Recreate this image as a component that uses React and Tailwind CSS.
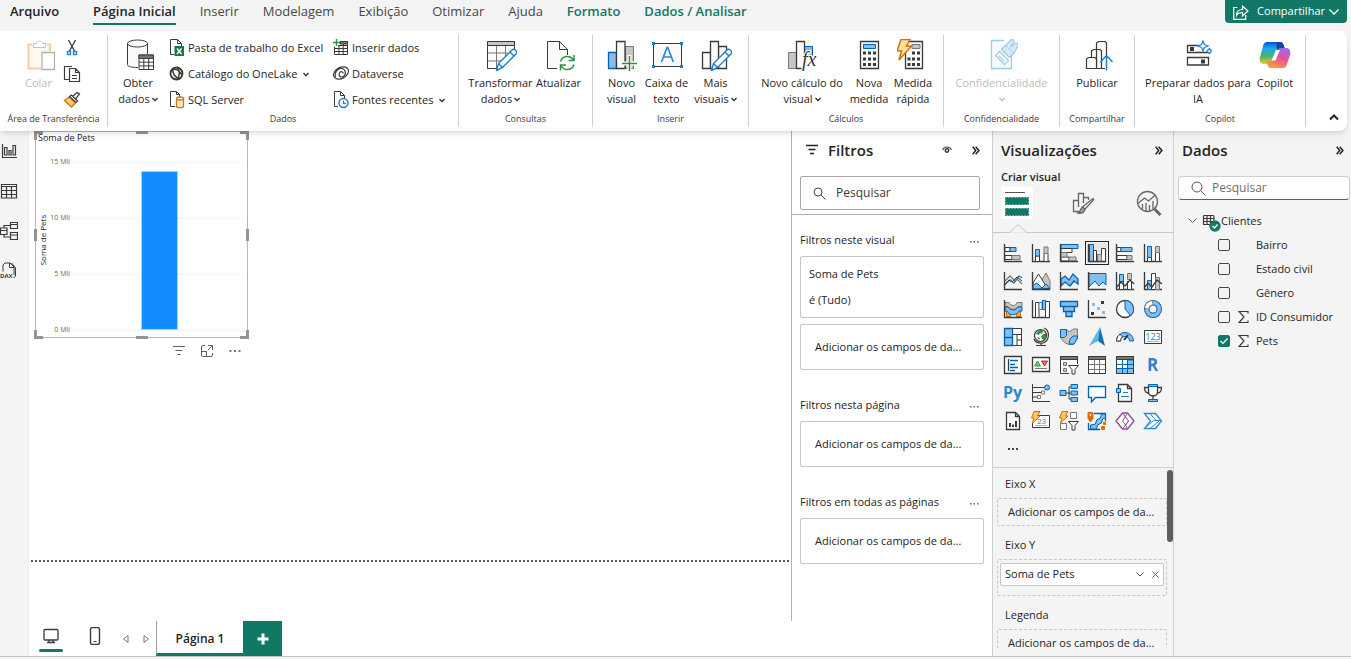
import React from "react";

const K = "#3a3a38";
const B = "#0063b1";
const LB = "#83beec";
const G = "#c8c6c4";
const DG = "#797774";
const GR = "#309048";
const OR = "#d47300";

function Svg({ size = 20, w, h, box, className = "", children }) {
  return (
    <svg
      width={w || size}
      height={h || size}
      viewBox={box || `0 0 ${size} ${size}`}
      fill="none"
      stroke={K}
      strokeWidth="1"
      className={`block shrink-0 ${className}`}
      aria-hidden="true"
    >
      {children}
    </svg>
  );
}

function Chevron({ className = "" }) {
  return (
    <Svg w={6} h={5} box="0 0 6 5" className={className}>
      <path d="M.5 1 3 3.6 5.500 1" stroke="currentColor" strokeWidth="1.300" />
    </Svg>
  );
}

function DoubleChevron() {
  return (
    <Svg w={8} h={9} box="0 0 8 9">
      <path d="M.7.800 3.700 4.500.700 8.200M3.700.800l3.200 3.700-3.200 3.700" stroke="#222" strokeWidth="1.500" />
    </Svg>
  );
}

const pencil = (
  <path d="m11.500 31.500 2-7L27 11c2-2 6 1.500 4 4L17.500 28.500Zm2-7 4 4M25 13l4 4" fill="#fff" stroke="#1a7fc4" strokeWidth="1.400" />
);

/* ---------- ribbon icons, 32 px ---------- */
const big = {
  paste: (
    <g opacity=".45">
      <path d="M9 5.500H5.500v24H18M24 5.500h3V12" stroke="#e8913a" strokeWidth="2" />
      <path d="M7 7h19v6h-8v15H7Z" fill="#fdf1dd" stroke="none" />
      <path d="M10.500 8.500v-4h3c0-3 6-3 6 0h3v4Z" fill="#fff" stroke="#777" />
      <path d="M19 13.500h12.500v17H19Z" fill="#fff" stroke="#555" strokeWidth="1.300" />
    </g>
  ),
  database: (
    <g transform="translate(3)">
      <path d="M3 5v20.500c2 2.500 6 2.500 10 2.500V15h9V5Z" fill="#fafafa" stroke="none" />
      <ellipse cx="12.500" cy="4.500" rx="10" ry="3.500" fill="#fff" />
      <path d="M2.500 4.500v21c0 2 4 3 10.500 3M22.500 4.500V15" />
      <path d="M14 16h14.500v14.500H14Z" fill="#fff" />
      <path d="M14 16h14.500v3.500H14Z" fill={DG} />
      <path d="M18.800 19v11M23.700 19v11M14 23.200h14M14 26.900h14" />
    </g>
  ),
  transform: (
    <>
      <path d="M2.500 2.500h27v27h-27Z" fill="#fafafa" stroke="none" />
      <path d="M12 29.500H2.500v-27h27V12" />
      <path d="M2.500 2.500h27v4h-27Z" fill={G} />
      <path d="M11.500 7v22M20.500 7v11M3 14h20M3 22h13" stroke={DG} />
      {pencil}
    </>
  ),
  refresh: (
    <>
      <path d="M4.500 2.500h12l8 8V16M14 29.500H4.500v-27" />
      <path d="M5 3h11v8h8v5l-7 3-3 10H5Z" fill="#fafafa" stroke="none" />
      <path d="M16.500 2.500v8h8Z" fill="#fff" />
      <path d="M17.500 22.500c2-6 10-7 13-1M31 16v5.500h-5.500M31 25.500c-2 6-10 7-13 1M17.500 31.500V26H23" stroke={GR} strokeWidth="1.500" />
    </>
  ),
  newVisual: (
    <>
      <path d="M2.500 13.500h8v16h-8Z" fill={LB} stroke={B} strokeWidth="1.300" />
      <path d="M19.500 7.500h8v22h-8Z" fill={G} stroke={DG} />
      <path d="M10.500 2.500h8.500v27h-8.500Z" fill="#fafafa" strokeWidth="1.300" />
      <path d="M23.500 16v16M16 24.500h15" stroke="#fff" strokeWidth="4" />
      <path d="M23.500 17v15M16 24.500h15" stroke={GR} strokeWidth="1.500" />
    </>
  ),
  textbox: (
    <>
      <path d="M2.500 4.500h28v23h-28Z" fill="#fafafa" />
      <path d="M10.500 23 16 8.500h.8L22.300 23M12.500 18h8" stroke="#2b88d8" strokeWidth="1.700" />
      <path d="M1 3h3v3H1ZM29 3h3v3h-3ZM1 26h3v3H1ZM29 26h3v3h-3Z" fill="#1a7fc4" stroke="none" />
    </>
  ),
  moreVisuals: (
    <>
      <path d="M2.500 13.500h8v16h-8ZM18.500 7.500h8v22h-8Z" fill="#fafafa" strokeWidth="1.300" />
      <path d="M10.500 2.500h8v27h-8Z" fill="#fafafa" strokeWidth="1.300" />
      {pencil}
    </>
  ),
  calc: (
    <>
      <path d="M2.500 13.500h8v16h-8Z" fill={G} stroke={DG} />
      <path d="M18.500 7.500h8v9h-8Z" fill={LB} stroke={B} />
      <path d="M16 29.500h-5.500v-27h8V17" fill="#fafafa" strokeWidth="1.300" />
      <text x="16" y="27" fontFamily="Liberation Serif, serif" fontStyle="italic" fontSize="20" fill={K} stroke="#fff" strokeWidth="2" paintOrder="stroke">fx</text>
    </>
  ),
  measure: (
    <>
      <path d="M7.500 2.500h18v27h-18Z" fill="#fafafa" strokeWidth="1.300" />
      <path d="M10.500 5.500h12v4h-12Z" fill={LB} stroke={B} />
      <path d="M10 12.500h3v3h-3Zm5 0h3v3h-3Zm5 0h3v3h-3Zm-10 6h3v3h-3Zm5 0h3v3h-3Zm5 0h3v3h-3Zm-10 5.500h3v3h-3Zm5 0h3v3h-3Zm5 0h3v3h-3Z" fill={K} stroke="none" />
    </>
  ),
  quick: (
    <>
      <path d="M8.500 2.500h17v27h-17Z" fill="#fafafa" strokeWidth="1.300" />
      <path d="M15 5.500h8v4h-8Z" fill={G} stroke={DG} />
      <path d="M10.500 18.500h3v3h-3ZM15 12.500h3v3h-3Zm5 0h3v3h-3Zm-5 6h3v3h-3Zm5 0h3v3h-3Zm-9.500 5.500h3v3h-3Zm4.500 0h3v3h-3Zm5 0h3v3h-3Z" fill={K} stroke="none" />
      <path d="M4 .5h9L9.500 7h5L2 21l2.500-9H0Z" fill="#fce0a0" stroke={OR} strokeWidth="1.500" />
    </>
  ),
  sensitivity: (
    <g stroke="#9fcbe5" strokeWidth="1.300" transform="translate(2)">
      <path d="M16 1.500H3.500v28h20V17" fill="#f7fbfd" />
      <path d="m7.500 16.500 4-4 9 9-4 4ZM10.500 16.500l6 6" fill="#fff" />
      <path d="m13.500 10.500 4.500-4.500 8 8-4.500 4.500Z" fill="#d4ebf7" />
      <path d="m18 6 5-5c1.500-1.500 4 1 2.500 2.500L22.500 8 27 4.500c2-1 4 1 2.500 3L26 14" fill="#d4ebf7" />
    </g>
  ),
  publish: (
    <>
      <path d="M15.500 29.500V4l2-1.500h6.500l1.500 1.500v12M10.500 29.500V12l2-1.500h6.500l1.500 1.500v17.500Z" fill="#fafafa" strokeWidth="1.200" />
      <path d="M5.500 29.500V20l2-1.500h6.500l1.500 1.500v9.500Z" fill="#fafafa" strokeWidth="1.200" />
      <path d="M5.500 29.500H24" />
      <path d="M25.500 31.500V17M19.500 23l6-6.500 6 6.500" stroke="#1a7fc4" strokeWidth="1.500" />
    </>
  ),
  prepare: (
    <>
      <path d="M17 6.500H5.500v7h21v-2M5.500 18.500h21v7.500h-21Z" fill="#fff" strokeWidth="1.300" />
      <path d="M8 8h4v4H8ZM19 20.500h4v4h-4Z" fill={K} stroke="none" />
      <path d="m21 2 1.400 3.600L26 7l-3.600 1.400L21 12l-1.400-3.600L16 7l3.600-1.400ZM27.500 9.500l2 2.500-2 2.500-2.500-2.500Z" fill="#fff" stroke="#2b88d8" strokeWidth="1.300" />
    </>
  ),
  copilot: (
    <g stroke="none">
      <defs>
        <linearGradient id="cpA" x1="0" y1="0" x2="0" y2="1">
          <stop offset="0" stopColor="#0a55c9" />
          <stop offset=".3" stopColor="#20a8f0" />
          <stop offset=".65" stopColor="#49b36a" />
          <stop offset="1" stopColor="#f2cf1f" />
        </linearGradient>
        <linearGradient id="cpB" x1=".7" y1="0" x2=".3" y2="1">
          <stop offset="0" stopColor="#a06bf0" />
          <stop offset=".45" stopColor="#e3509a" />
          <stop offset="1" stopColor="#ff9a3c" />
        </linearGradient>
      </defs>
      <path d="M8 3h13c2 0 3 1 3.500 3l1.500 4h-4c-2 0-3 1-4 3l-3 9c-1 2-2 3-4 3H5c-4 0-5-3-4-7L4 7c1-3 2-4 4-4Z" fill="url(#cpA)" />
      <path d="M17 3h4c2 0 3 1 3.500 3l1.500 4h-4l-4 1Z" fill="#1743a8" />
      <path d="M24 29H12c-2 0-3-1-3.500-3L7.500 22.500H11c2 0 3-1 4-3l3-7.500c1-2 2-3 4-3h5c4 0 5 3 4 7l-3 9c-1 3-2 4-4 4Z" fill="url(#cpB)" />
      <path d="M17 11h4l-4.500 10.500h-4Z" fill="#fff" />
    </g>
  ),
};

/* ---------- ribbon icons, 18 px ---------- */
const small = {
  cut: (
    <>
      <path d="M5.500 1 12 13M12.500 1 6 13" strokeWidth="1.300" />
      <path d="M4.500 12.500h3v3h-3ZM10.500 12.500h3v3h-3Z" stroke="#2b88d8" strokeWidth="1.500" />
    </>
  ),
  copy: (
    <>
      <path d="M6 14.500H1.500v-13H9" strokeWidth="1.200" />
      <path d="M6.500 3.500h6l4 4v9h-10ZM12.500 3.500v4h4M9 10.500h5M9 13.500h5" fill="#fff" strokeWidth="1.200" />
    </>
  ),
  brush: (
    <>
      <path d="m9 6 5-4.500 2.500 1.500L12 8.500" fill="#fff" strokeWidth="1.200" />
      <path d="m1.500 9.500 7 6.500 4-4-6-6Z" fill="#f8c58a" stroke={OR} strokeWidth="1.400" />
      <path d="m6.500 5.500 6.500 6L14.500 10 8.500 4Z" fill="#fff" strokeWidth="1.200" />
    </>
  ),
  excel: (
    <>
      <path d="M6 15.500H2.500v-15h7l4 4V7M9.500.5v4h4" fill="#fff" stroke={K} />
      <path d="M6.500 7H16v10H6.500Z" fill="#107c41" stroke="none" />
      <path d="m9 9.500 4.500 5.500M13.500 9.500 9 15" stroke="#fff" strokeWidth="1.500" />
    </>
  ),
  onelake: (
    <>
      <circle cx="8.500" cy="8.500" r="6" strokeWidth="1.800" />
      <path d="M3 5c4-2 8 0 11 5M5 3c-1 5 2 10 7 11M9 2c3 3 3 8 .5 12" strokeWidth="1.500" />
    </>
  ),
  sql: (
    <>
      <path d="M7 15.500H2.500v-15h6l3 3V6M8.500.5v3h3" fill="#fff" />
      <path d="M8.500 7.500v8c0 1.500 7 1.500 7 0v-8" fill="#fde9cf" stroke={OR} strokeWidth="1.300" />
      <ellipse cx="12" cy="7.500" rx="3.500" ry="1.500" fill="#fff" stroke={OR} strokeWidth="1.300" />
    </>
  ),
  insert: (
    <>
      <path d="M2.500 7.500v8h13v-13h-7" fill="#fff" />
      <path d="M8 2.500h7.500V5H8Z" fill={DG} />
      <path d="M7 6v9.500M11.200 5v10.500M6 6.500h9M2.500 9.500h13M2.500 12.500h13" />
      <path d="M4.500 0v7M1 3.500h7" stroke={GR} strokeWidth="1.400" />
    </>
  ),
  dataverse: (
    <>
      <ellipse cx="9" cy="8" rx="8" ry="5.500" transform="rotate(-28 9 8)" strokeWidth="1.200" />
      <path d="M3.500 12C2 7 6 3 10 3.500c4 1 4.500 6 1.500 8-3 1.500-5.500-1-4-3.500 1-2 4-1.500 3.500.5" strokeWidth="1.200" />
    </>
  ),
  recent: (
    <>
      <path d="M6 15.500H2.500v-15h6l4 4V7M8.500.5v4h4" fill="#fff" />
      <circle cx="11.500" cy="12" r="4.500" fill="#fff" stroke="#1a7fc4" strokeWidth="1.400" />
      <path d="M11.500 9.500v3h2.500" stroke="#1a7fc4" strokeWidth="1.200" />
    </>
  ),
};

/* ---------- gallery icons, 20 px ---------- */
const axis = <path d="M1.500 1v17.500H19" strokeWidth="1.300" />;
const bolt = <path d="M3 .5h6L6.500 5H9L1.500 12l1.300-5H.5Z" fill="#f9c76a" stroke={OR} />;
const doc = <path d="M3.500 1.500h9l4 4v13h-13ZM12.500 1.500v4h4" fill="#fff" strokeWidth="1.300" />;
const gallery = [
  ["Gráfico de barras empilhadas", <>{axis}<path d="M2 4.500h5v4H2ZM2 12.500h7v4H2Z" fill="#fff" /><path d="M7 4.500h6v4H7Z" fill={LB} stroke={B} /><path d="M9 12.500h8v4H9Z" fill={G} stroke={DG} /></>],
  ["Gráfico de colunas empilhadas", <>{axis}<path d="M4.500 13h4v5.500h-4ZM13 10.500h4v8h-4Z" fill="#fff" /><path d="M4.500 6.500h4v6.500h-4Z" fill={LB} stroke={B} /><path d="M13 4h4v6.500h-4Z" fill={G} stroke={DG} /></>],
  ["Gráfico de barras clusterizadas", <><path d="M2 1.500h17v4H2Z" fill={LB} stroke={B} /><path d="M2 5.500h11v4H2ZM2 14h8v4H2Z" fill="#fff" /><path d="M2 9.500h6V14H2ZM10 14h7v4h-7Z" fill={G} stroke={DG} />{axis}</>],
  ["Gráfico de colunas clusterizadas", <><path d="M2.500 1.500h4v17h-4Z" fill={LB} stroke={B} /><path d="M6.500 7.500h3v11h-3ZM14.500 5.500h4v13h-4Z" fill="#fff" /><path d="M10.500 11.500h4v7h-4Z" fill={G} stroke={DG} />{axis}</>],
  ["Gráfico de 100% barras empilhadas", <>{axis}<path d="M2 4.500h4v4H2ZM2 12.500h10v4H2Z" fill="#fff" /><path d="M6 4.500h11v4H6Z" fill={LB} stroke={B} /><path d="M12 12.500h5v4h-5Z" fill={G} stroke={DG} /></>],
  ["Gráfico de 100% colunas empilhadas", <>{axis}<path d="M4.500 14h4v4.500h-4ZM12.500 9.500h4v9h-4Z" fill="#fff" /><path d="M4.500 3.500h4v11h-4Z" fill={LB} stroke={B} /><path d="M12.500 3.500h4v6h-4Z" fill={G} stroke={DG} /></>],
  ["Gráfico de linhas", <>{axis}<path d="m2 13 5-4 4 3 5-7 3 2" stroke="#1a7fc4" strokeWidth="1.400" /><path d="m2 10 5-5 5 5 2-2 5 5" stroke={DG} strokeWidth="1.300" /><path d="m2 14 4-5 3 2 5-5 5 4" /></>],
  ["Gráfico de áreas", <><path d="m9 12 6-10 4 8v8.500H9Z" fill={G} stroke={DG} /><path d="m2 12 5.500-9L15 15v3H2Z" fill="#fff" /><path d="M2 18v-4l4-2 5 5 4-4 4 4.500Z" fill={LB} stroke={B} />{axis}</>],
  ["Gráfico de áreas empilhadas", <><path d="m2 8 4-3 4 4 4-6 5 5v5l-4-3-4 5-5-4-4 4Z" fill={LB} stroke={B} strokeWidth="1.300" />{axis}</>],
  ["Gráfico de áreas 100% empilhadas", <><path d="M2 2.500h17V14l-3-3-4 4-4-5-6 6Z" fill={LB} stroke={B} />{axis}</>],
  ["Linha e colunas empilhadas", <>{axis}<path d="M4.500 9v9.500h4V9M12.500 10v8.500h4V10" fill="#fff" /><path d="M4.500 3.500h4v7h-4Z" fill={LB} stroke={B} /><path d="M12.500 2.500h4v6h-4Z" fill={G} stroke={DG} /><path d="m2 16 4-5 4 4 5-6 4 4" strokeWidth="1.300" /></>],
  ["Linha e colunas clusterizadas", <>{axis}<path d="M4.500 9.500h4v9h-4Z" fill={LB} stroke={B} /><path d="M8.500 2.500h4v16h-4Z" fill="#fff" /><path d="M12.500 6.500h4v12h-4Z" fill={G} stroke={DG} /><path d="m2 16 3-4 4 4 5-7 5 4" strokeWidth="1.300" /></>],
  ["Gráfico de faixa de opções", <><path d="M3.500 11.500h4v6h-4ZM13.500 11.500h4v6h-4Z" fill="#f5a55a" stroke={OR} /><path d="M2 3.500h4c1.500 4 7 4 8 0h5v4h-4c-1.500 3.500-8 3.500-10 0H2Z" fill={G} stroke={DG} /><path d="M2 8h3c2 4 8 4 10 0h4v4h-3c-2 5-10 5-12 0H2Z" fill={LB} stroke={B} />{axis}</>],
  ["Gráfico de cascata", <>{axis}<path d="M4.500 3.500h3.500v15H4.500ZM14.500 2.500h4v16h-4Z" fill="#fff" /><path d="M8 3.500h3v7H8Z" fill="#fff" stroke={DG} /><path d="M11.500 1.500h3v9h-3Z" fill={LB} stroke={B} /></>],
  ["Funil", <path d="M1.500 2.500h17v5h-17ZM4.500 7.500h11v5h-11ZM7 12.500h6v5H7Z" fill={LB} stroke={B} strokeWidth="1.300" />],
  ["Gráfico de dispersão", <>{axis}<g stroke="none"><path d="M5 4h3v3H5ZM10 8h3v3h-3ZM15 12h3v3h-3Z" fill={LB} /><path d="M14 2h3v3h-3ZM4 13h3v3H4Z" fill={K} /></g></>],
  ["Gráfico de pizza", <><circle cx="10" cy="10" r="8.500" fill="#fff" strokeWidth="1.300" /><path d="M10 10V1.500a8.500 8.500 0 0 1 5.500 15Z" fill={LB} stroke={B} /></>],
  ["Gráfico de rosca", <><circle cx="10" cy="10" r="6.300" stroke={B} strokeWidth="5.500" /><circle cx="10" cy="10" r="6.300" stroke={LB} strokeWidth="3.500" /><path d="M3.700 10A6.300 6.300 0 0 1 10 3.700" stroke={DG} strokeWidth="5.500" /><path d="M3.700 9.300A6.300 6.300 0 0 1 9.300 3.700" stroke="#fff" strokeWidth="3.500" /></>],
  ["Treemap", <><path d="M1.500 1.500h17v17h-17Z" fill="#fff" /><path d="M1.500 1.500h8v17h-8ZM1.500 10.500h8" fill={LB} stroke={B} strokeWidth="1.300" /><path d="M9.500 1.500h9v17h-9M9.500 7.500h9M14 7.500v11M14 13h4.500" /></>],
  ["Mapa", <><circle cx="9.500" cy="8.500" r="6" fill="#fff" strokeWidth="1.200" /><path d="M7 4c2-2 4-2 5 0l-1 3-2-1-1 2-3-1ZM12 7l3 0v4l-3 2-2-3ZM6 10l3 1-1 2Z" fill="#309048" stroke="none" /><path d="M13 1c6 2 6 13-1 15-5 1-9-2-9-4M10 16v2.500M5 18.500h10" strokeWidth="1.200" /></>],
  ["Mapa coroplético", <><path d="M1.500 2.500h4l5 2 4-2.500h4v9l-4 6.500h-5l-4-2-4-5Z" fill={G} stroke={DG} /><path d="M1.500 2.500h6v6l-2 2h-4ZM11 12l3-3h4.500v2l-3.500 6h-5Z" fill={LB} stroke={B} /></>],
  ["Mapa do Azure", <g stroke="none"><path d="M13 0 2 19l9-5Z" fill="#5cb8e8" /><path d="m13 0 5 19-7-5Z" fill="#1272b8" /></g>],
  ["Medidor", <><path d="M1.500 14a8.500 8.500 0 0 1 17 0h-4a4.500 4.500 0 0 0-9 0Z" fill={LB} stroke={B} /><path d="M1.500 14A8.500 8.500 0 0 1 5 7l2.500 3c-1 1-2 2-2 4Z" fill="#fff" /><path d="m9 13 4-5" strokeWidth="2" /></>],
  ["Cartão", <><path d="M1.500 3.500h17v13h-17Z" fill="#fff" /><text x="2.300" y="13" fontSize="9" fill="#1a7fc4" stroke="none">123</text><path d="M4 14.500h12" stroke={LB} /></>],
  ["Cartão de várias linhas", <><path d="M1.500 1.500h17v17h-17Z" fill="#fff" strokeWidth="1.300" /><path d="M5.500 4v12" strokeWidth="1.300" /><path d="M7 5.500h8M7 9.500h5M7 12.500h8M7 15.500h5" stroke={B} strokeWidth="1.300" /></>],
  ["KPI", <><path d="M1.500 2.500h17v14h-17Z" fill="#fff" strokeWidth="1.300" /><path d="m3.500 11 3-5 3 5Z" fill="#7cc48a" stroke={GR} /><path d="M10.500 6h6l-3 5Z" fill="#f17070" stroke="#c22" /><path d="M4 13.500h12" stroke={DG} /></>],
  ["Segmentação de dados", <><path d="M10 18.500H1.500v-17h17V9" fill="#fff" /><path d="M1.500 1.500h17v3h-17Z" fill={DG} /><path d="M4.500 7.500h3v3h-3ZM4.500 13.500h3v3h-3Z" fill={G} stroke={DG} /><path d="M9.500 10.500h10l-3.500 4v4.500h-3v-4.500Z" fill="#fff" /></>],
  ["Tabela", <><path d="M1.500 1.500h17v17h-17Z" fill="#fff" /><path d="M7.500 4.500v14M12.500 4.500v14M1.500 9.500h17M1.500 14.500h17" stroke={DG} /><path d="M1.500 1.500h17v3h-17Z" fill={DG} /><path d="M1.500 1.500h17v17h-17Z" /></>],
  ["Matriz", <><path d="M1.500 1.500h17v17h-17Z" fill="#fff" /><path d="M12.500 5h6v13.500h-17V13.500h11Z" fill={LB} stroke={B} /><path d="M1.500 1.500h17v3h-17Z" fill={DG} /><path d="M7.500 4.500v14M12.500 4.500v14M1.500 9.500h17M1.500 13.500h17" stroke={B} /><path d="M1.500 1.500h17v17h-17Z" /></>],
  ["Visual do script R", <text x="4" y="16" fontSize="17" fontWeight="700" fill="#2b88c8" stroke="none">R</text>],
  ["Visual do Python", <text x="0" y="15" fontSize="16" fontWeight="700" fill="#2b88c8" stroke="none">Py</text>],
  ["Principais influenciadores", <><path d="M1.500 1v17.500H19" /><path d="M2 4.500h12M2 9.500h8M2 14h4" /><circle cx="16" cy="4.500" r="2.500" fill={LB} stroke={B} /><path d="M10.500 8h3v3h-3ZM6.500 12.500h3v3h-3Z" fill="#fff" stroke={DG} /></>],
  ["Árvore de decomposição", <><path d="M7 10h5M12 4H10v12h2" /><path d="M1 7.500h6v5H1ZM12 1.500h6.500v4H12ZM12 8h6.500v4H12ZM12 14.500h6.500v4H12Z" fill={LB} stroke={B} /></>],
  ["P e R", <path d="M1.500 3.500h17v11h-10l-4 4.500v-4.500h-3Z" fill="#fff" stroke={B} strokeWidth="1.300" />],
  ["Narrativa inteligente", <>{doc}<path d="M1.500 5.500h4v4h-4Z" fill={LB} stroke={B} /><path d="M8 9.500h5M6 13.500h8" stroke="#1a7fc4" /></>],
  ["Metas", <><path d="M5.500 2.500h9v6c0 3-2 4.500-4.500 4.500S5.500 11.500 5.500 8.500Z" fill="#fff" strokeWidth="1.300" /><path d="M5.500 4.500h-4c0 4 1.500 5.500 4 5.500M14.500 4.500h4c0 4-1.500 5.500-4 5.500M10 13v4" strokeWidth="1.300" /><path d="M5.500 1.500h9v2h-9ZM5.500 16.500h9v2h-9Z" fill={LB} stroke={B} /></>],
  ["Relatório paginado", <>{doc}<path d="M6 12h2v4H6ZM9 13.500h2V16H9ZM12 10h2v6h-2Z" fill={K} stroke="none" /></>],
  ["Cartão (novo)", <><path d="M7 4.500h11.500v12H1.500V12" fill="#fff" /><text x="6" y="13" fontSize="8" fill="#1a7fc4" stroke="none">23</text><path d="M4 14.500h12" stroke={LB} />{bolt}</>],
  ["Segmentação (novo)", <><path d="M11.500 1.500h6v6h-6ZM1.500 12.500h6v6h-6Z" fill="#fff" stroke={DG} /><path d="M9.500 10.500h10l-3.500 4v4.500h-3v-4.500Z" fill="#fff" />{bolt}</>],
  ["ArcGIS Maps", <><path d="M7 2.500h11.500v8M1.500 12v6.500H13" stroke={B} strokeWidth="1.300" /><path d="M18.500 3h-4l-1 4-4 2-1 4-5 1v4h6l1-4 4-2 1-4 3-1Z" fill={LB} stroke={B} /><path d="M1 1.500h5v6L3.500 11 1 7.500Z" fill={OR} stroke={OR} /><path d="M16.500 11.500h2v2h-2ZM14.500 15.500h3v3h-3Z" fill={OR} stroke={OR} /><circle cx="3.500" cy="4" r="1" fill="#fff" stroke="none" /></>],
  ["Power Apps", <><path d="M7.500 2h5l6.500 8-6.500 8h-5L1 10Z" fill="#fff" stroke="#92479e" strokeWidth="1.300" strokeLinejoin="round" /><path d="M7.500 2 13.500 10l-3 4-3-4 5-8M13.500 10l-6 8M10.500 14l2 4" stroke="#92479e" /></>],
  ["Power Automate", <><path d="M1.500 2.500h11l6 7.500-6 7.500h-11l6-7.500Z" fill="#fff" stroke="#2b88d8" strokeWidth="1.300" /><path d="M7 2.500 13 9.500M1.500 17.500l9-8h8M7 17.500l9-7.500" stroke="#2b88d8" /></>],
];

function BigButton({ icon, lines, chevron, width, disabled, below }) {
  return (
    <button type="button" disabled={disabled} className={`flex shrink-0 flex-col items-center pt-1 leading-4 ${width} ${disabled ? "text-[#bcbcbc]" : "text-[#252423]"}`}>
      <Svg size={32}>{big[icon]}</Svg>
      <span className="mt-1 block whitespace-nowrap">{lines[0]}</span>
      {(lines[1] || below) && (
        <span className="flex h-4 items-center gap-0.5 whitespace-nowrap">
          {lines[1]}
          {chevron && <Chevron />}
        </span>
      )}
    </button>
  );
}

function SmallButton({ icon, text, chevron }) {
  return (
    <button type="button" className="flex h-[26px] shrink-0 items-center gap-0.5 whitespace-nowrap">
      <Svg size={18}>{small[icon]}</Svg>
      {text}
      {chevron && <Chevron className="ml-1" />}
    </button>
  );
}

function Group({ label, width, children }) {
  return (
    <section className={`my-1 flex shrink-0 flex-col border-r border-[#d0d0d0] ${width}`}>
      <div className="flex min-h-0 flex-1 justify-center">{children}</div>
      <h2 className="h-4 shrink-0 whitespace-nowrap text-center text-[9px] leading-4 text-[#3b3a39]">{label}</h2>
    </section>
  );
}

function Ribbon() {
  return (
    <div className="relative z-10 mr-1 flex h-[100px] shrink-0 rounded-r-lg bg-white shadow-md">
      <Group label="Área de Transferência" width="w-[108px]">
        <BigButton icon="paste" lines={["Colar"]} width="w-[48px]" disabled />
        <div className="flex flex-col pr-3">
          {[["cut", "Recortar"], ["copy", "Copiar"], ["brush", "Pincel de formatação"]].map(([i, l]) => (
            <button key={i} type="button" aria-label={l} className="flex h-[26px] shrink-0 items-center">
              <Svg size={18}>{small[i]}</Svg>
            </button>
          ))}
        </div>
      </Group>
      <Group label="Dados" width="w-[351px]">
        <BigButton icon="database" lines={["Obter", "dados"]} chevron width="w-[60px]" />
        <div className="flex w-[164px] flex-col">
          <SmallButton icon="excel" text="Pasta de trabalho do Excel" />
          <SmallButton icon="onelake" text="Catálogo do OneLake" chevron />
          <SmallButton icon="sql" text="SQL Server" />
        </div>
        <div className="flex w-[126px] flex-col">
          <SmallButton icon="insert" text="Inserir dados" />
          <SmallButton icon="dataverse" text="Dataverse" />
          <SmallButton icon="recent" text="Fontes recentes" chevron />
        </div>
      </Group>
      <Group label="Consultas" width="w-[134px]">
        <BigButton icon="transform" lines={["Transformar", "dados"]} chevron width="w-[66px]" />
        <BigButton icon="refresh" lines={["Atualizar"]} width="w-[50px]" />
      </Group>
      <Group label="Inserir" width="w-[156px]">
        <BigButton icon="newVisual" lines={["Novo", "visual"]} width="w-[42px]" />
        <BigButton icon="textbox" lines={["Caixa de", "texto"]} width="w-[48px]" />
        <BigButton icon="moreVisuals" lines={["Mais", "visuais"]} chevron width="w-[50px]" />
      </Group>
      <Group label="Cálculos" width="w-[195px]">
        <BigButton icon="calc" lines={["Novo cálculo do", "visual"]} chevron width="w-[90px]" />
        <BigButton icon="measure" lines={["Nova", "medida"]} width="w-[44px]" />
        <BigButton icon="quick" lines={["Medida", "rápida"]} width="w-[44px]" />
      </Group>
      <Group label="Confidencialidade" width="w-[116px]">
        <BigButton icon="sensitivity" lines={["Confidencialidade"]} below chevron disabled width="w-[100px]" />
      </Group>
      <Group label="Compartilhar" width="w-[75px]">
        <BigButton icon="publish" lines={["Publicar"]} width="w-[52px]" />
      </Group>
      <Group label="Copilot" width="w-[171px]">
        <BigButton icon="prepare" lines={["Preparar dados para", "IA"]} width="w-[110px]" />
        <BigButton icon="copilot" lines={["Copilot"]} width="w-[44px]" />
      </Group>
      <button type="button" aria-label="Recolher faixa de opções" className="ml-auto self-end px-2 pb-2.5">
        <Svg w={10} h={7} box="0 0 10 7"><path d="m1 5.500 4-4 4 4" stroke="#222" strokeWidth="2" /></Svg>
      </button>
    </div>
  );
}

function Header() {
  const tabs = ["Inserir", "Modelagem", "Exibição", "Otimizar", "Ajuda"];
  return (
    <header className="flex h-[31px] shrink-0 items-start justify-between pl-2.5 pr-1 text-[13px]">
      <nav className="flex gap-6 whitespace-nowrap leading-[23px] text-[#484644]">
        <a href="#arquivo" className="mr-2.5 font-semibold text-[#252423]">Arquivo</a>
        <a href="#inicio" className="border-b-2 border-[#117865] font-semibold text-[#252423]">Página Inicial</a>
        {tabs.map((t) => <a key={t} href={`#${t}`}>{t}</a>)}
        <a href="#formato" className="font-semibold text-[#117865]">Formato</a>
        <a href="#analisar" className="font-semibold text-[#117865]">Dados / Analisar</a>
      </nav>
      <button type="button" className="flex h-[23px] items-center gap-2 rounded-b bg-[#117865] px-2 text-[11px] text-white">
        <Svg w={16} h={16} box="0 0 16 16">
          <path d="M4.500 3.500H.700v11.800h12V11M3.500 11.500c0-4 2.500-6 6-6V2L15 7l-5.500 5V8.500c-2.500 0-4.500.5-6 3Z" stroke="#fff" strokeWidth="1.200" />
        </Svg>
        <span className="flex items-center gap-1">
          Compartilhar
          <Svg w={10} h={6} box="0 0 10 6"><path d="m.500.500 4.500 4.500L9.500.500" stroke="#fff" strokeWidth="1.300" /></Svg>
        </span>
      </button>
    </header>
  );
}

function Rail() {
  const items = [
    ["Exibição de relatório", <path d="M2.500 2v13.500H17M4.500 5.500h2.500v7.500H4.500ZM9 8.500h2V13H9ZM13 3.500h2.500V13H13Z" strokeWidth="1.200" />],
    ["Exibição de tabela", <path d="M1.500 2.500h15v13.500h-15ZM1.500 4.500h15M1.500 8.500h15M1.500 12.500h15M6.500 4v12M11.500 4v12" strokeWidth="1.200" />],
    ["Exibição de modelo", <path d="M10.500.5h7v6h-7ZM10.500 2.500h7M10.500 10.500h7v7h-7ZM10.500 13h7M.5 6h6.500v6.500H.5ZM.5 8.500H7M4 6V3.500h6M4 12.500v2.500h6" strokeWidth="1.200" />],
    ["Exibição de consulta DAX", <><path d="M3 9.500V3l2-2h5l4 4v8M9.500 1v4.500H14M11.500 1l4 4.500V14l-2 2" /><text x="0" y="16" fontSize="6" fontWeight="700" fill={K} stroke="none">DAX</text></>],
  ];
  return (
    <nav className="flex w-[29px] shrink-0 flex-col gap-[22px] border-r border-[#ededed] pt-[11px]">
      {items.map(([l, d]) => (
        <button key={l} type="button" aria-label={l}><Svg size={18}>{d}</Svg></button>
      ))}
    </nav>
  );
}

function Chart() {
  const ticks = [["15 Mil", 31], ["10 Mil", 87], ["5 Mil", 143], ["0 Mil", 199]];
  return (
    <div className="absolute left-[5px] top-0">
      <svg width="215" height="208" viewBox="0 0 215 208" role="img" aria-label="Soma de Pets">
        <path d="M1.500.5h212v206H1.500Z" fill="#fff" stroke="#b8b8b8" />
        <path d="M0 0h9v3H3v6H0ZM206 0h9v9h-3V3h-6ZM0 208h9v-3H3v-6H0ZM206 208h9v-9h-3v6h-6ZM102 0h12v3h-12ZM102 205h12v3h-12ZM0 98h3v12H0ZM212 98h3v12h-3Z" fill="#949494" />
        <text x="4" y="10" fontSize="9" fill="#252423">Soma de Pets</text>
        {ticks.map(([t, y]) => (
          <g key={t}>
            <text x="36" y={y + 2} fontSize="7" textAnchor="end" fill="#666">{t}</text>
            <path d={`M40 ${y}.5H210`} stroke="#d8d8d8" strokeDasharray="1 3" />
          </g>
        ))}
        <text transform="translate(12 109) rotate(-90)" fontSize="8" textAnchor="middle" fill="#252423">Soma de Pets</text>
        <rect x="107.500" y="40.500" width="36" height="158" fill="#118dff" stroke="#9fd3ff" />
      </svg>
      <div className="flex justify-end gap-4 pr-2 pt-1.5">
        <button type="button" aria-label="Filtros"><Svg size={12}><path d="M0 1.500h12M2.500 5.500h7M4.500 9.500h3" stroke="#605e5c" strokeWidth="1.200" /></Svg></button>
        <button type="button" aria-label="Modo de foco"><Svg size={12}><path d="M4 .5H2A1.500 1.500 0 0 0 .5 2v8A1.500 1.500 0 0 0 2 11.500h8a1.500 1.500 0 0 0 1.500-1.500V8M.5 6.500h5v5M7 .5h4.500V5M11 1 7 5" stroke="#605e5c" /></Svg></button>
        <button type="button" aria-label="Mais opções"><Svg size={12}><path d="M.5 5h2v2h-2ZM5 5h2v2H5ZM9.500 5h2v2h-2Z" fill="#777" stroke="none" /></Svg></button>
      </div>
    </div>
  );
}

function PageBar() {
  return (
    <footer className="flex h-[35px] shrink-0 items-stretch bg-white pl-2.5">
      <button type="button" aria-label="Layout da área de trabalho" className="flex w-6 flex-col items-center justify-between pb-1 pt-[7px]">
        <Svg size={16}><path d="M2 1.500h12a1 1 0 0 1 1 1v8.500a1 1 0 0 1-1 1H2a1 1 0 0 1-1-1V2.500a1 1 0 0 1 1-1ZM6 12v2.500M10 12v2.500M4 14.500h8" strokeWidth="1.300" /></Svg>
        <span className="h-[3px] w-6 rounded-full bg-[#117865]" />
      </button>
      <button type="button" aria-label="Layout móvel" className="ml-3 flex w-10 items-start justify-center pt-1.5">
        <Svg w={12} h={18} box="0 0 12 18"><rect x="1.500" y=".5" width="9" height="17" rx="2" strokeWidth="1.400" /><path d="M4.500 14.500h3" /></Svg>
      </button>
      <div className="ml-[7px] flex items-center gap-3 pr-1.5">
        <button type="button" aria-label="Página anterior"><Svg size={8}><path d="M6 .5v7L1.500 4Z" stroke="#777" /></Svg></button>
        <button type="button" aria-label="Próxima página"><Svg size={8}><path d="M2 .5v7L6.500 4Z" stroke="#777" /></Svg></button>
      </div>
      <button type="button" className="w-[87px] border-b-[3px] border-l border-b-[#117865] border-l-[#a0a0a0] pt-1 text-[12px] font-semibold text-[#252423]">Página 1</button>
      <button type="button" aria-label="Nova página" className="flex w-[39px] items-center justify-center bg-[#117865]">
        <Svg size={12}><path d="M6 .500v11M.500 6h11" stroke="#fff" strokeWidth="3" /></Svg>
      </button>
    </footer>
  );
}

const ADD = "Adicionar os campos de da...";

function FilterSection({ title, children }) {
  return (
    <section className="mb-[27px]">
      <div className="mb-2 flex h-4 items-center justify-between pr-[5px]">
        <h3>{title}</h3>
        <button type="button" aria-label={`Mais opções: ${title}`} className="pt-1">
          <Svg w={10} h={4} box="0 0 10 4"><path d="M1 1h1.500v1.500H1ZM4.500 1H6v1.500H4.500ZM8 1h1.500v1.500H8Z" fill="#666" stroke="none" /></Svg>
        </button>
      </div>
      <div className="flex flex-col gap-1.5">
        {children}
        <div className="flex h-[46px] items-center rounded-xs border border-[#c8c6c4] pl-3.5">{ADD}</div>
      </div>
    </section>
  );
}

function Filters() {
  return (
    <aside className="flex w-[201px] shrink-0 flex-col border-l border-[#b3b0ad] bg-white">
      <div className="flex h-[38px] items-center pl-3.5 pr-3">
        <Svg w={12} h={12} box="0 0 12 12"><path d="M0 1.500h12M2.500 5.500h7M4 9.500h4" stroke="#222" strokeWidth="1.400" /></Svg>
        <h2 className="ml-2.5 text-[15px] font-semibold">Filtros</h2>
        <button type="button" aria-label="Ocultar painel" className="ml-auto">
          <Svg w={10} h={8} box="0 0 10 8"><path d="M.5 4C2 0 8 0 9.500 4" stroke="#555" strokeWidth="1.200" /><circle cx="5" cy="4.500" r="1.700" stroke="#333" strokeWidth="1.500" /></Svg>
        </button>
        <button type="button" aria-label="Recolher filtros" className="ml-5"><DoubleChevron /></button>
      </div>
      <div className="border-b border-[#b3b0ad] pb-1 pl-2 pr-3 pt-[7px]">
        <label className="flex h-[34px] items-center gap-2.5 rounded-xs border border-[#a6a6a6] pl-3">
          <Svg w={13} h={13} box="0 0 13 13"><circle cx="5" cy="5" r="4" stroke="#444" /><path d="m8 8 4.500 4.500" stroke="#444" /></Svg>
          <input type="search" aria-label="Pesquisar filtros" placeholder="Pesquisar" className="w-full min-w-0 bg-transparent text-[12px] outline-none placeholder:text-[#3b3a39]" />
        </label>
      </div>
      <div className="pl-2 pr-2 pt-[17px]">
        <FilterSection title="Filtros neste visual">
          <div className="flex h-[62px] flex-col justify-center gap-2.5 rounded-xs border border-[#c8c6c4] pl-2 leading-4">
            <p>Soma de Pets</p>
            <p>é (Tudo)</p>
          </div>
        </FilterSection>
        <FilterSection title="Filtros nesta página" />
        <FilterSection title="Filtros em todas as páginas" />
      </div>
    </aside>
  );
}

function Visualizations() {
  return (
    <aside className="relative flex w-[181px] shrink-0 flex-col border-l border-[#d0d0d0] pb-2">
      <div className="flex h-[38px] items-center justify-between pl-2 pr-2.5">
        <h2 className="text-[15px] font-semibold">Visualizações</h2>
        <button type="button" aria-label="Recolher visualizações"><DoubleChevron /></button>
      </div>
      <h3 className="h-[18px] pl-2 font-semibold leading-4">Criar visual</h3>
      <div className="flex h-[45px] items-start justify-between pl-2 pr-2">
        <button type="button" aria-label="Criar visual" className="flex h-8 w-8 items-center justify-center rounded-xs bg-white">
          <Svg size={28}><path d="M2 3.500h20" stroke="#555" /><path d="M2 8h24v8H2ZM2 19h24v8H2Z" fill="#117865" stroke="none" /><path d="M2.500 8.500h23v7h-23ZM2.500 19.500h23v7h-23Z" stroke="#cfe4e0" strokeDasharray="1 2" /></Svg>
        </button>
        <button type="button" aria-label="Formatar visual" className="flex h-8 w-8 items-center justify-center">
          <Svg size={24}><g stroke="#666" strokeWidth="1.300"><path d="M8 20.500H2.500v-11h5M7.500 16V2.500h5V12M12.500 6.500h5V9" /><path d="M22 7.500c1 .5 1 1 0 2L14 18l-2.500-2Z" fill="#fff" /><path d="M11.500 16 14 18c0 3-3 5-7 4 3-1 2-5 4.500-6Z" fill="#999" /></g></Svg>
        </button>
        <button type="button" aria-label="Análise" className="flex h-8 w-8 items-center justify-center">
          <Svg size={26}><g stroke="#666" strokeWidth="1.300"><circle cx="11.500" cy="11.500" r="10" /><path d="m2.500 13 6-5 4 3 7-6M6.500 19v-5M10 21v-8M13.500 21v-6M17 19v-8" /><path d="m18.500 19 6 6" strokeWidth="3" /></g></Svg>
        </button>
      </div>
      <div className="relative border-t border-[#c8c6c4] pb-2 pl-2.5 pt-2.5">
        <svg width="18" height="9" viewBox="0 0 18 9" className="absolute -top-[9px] left-4" aria-hidden="true">
          <path d="M0 8.500 9 .800 18 8.500" fill="#f4f4f4" stroke="#c8c6c4" />
          <path d="M2 9h14" stroke="#f4f4f4" />
        </svg>
        <div className="grid w-40 grid-cols-6 gap-2">
          {gallery.map(([label, art], i) => (
            <button key={label} type="button" aria-label={label} title={label} className={`h-5 w-5 ${i === 3 ? "bg-[#e6e6e6] outline outline-1 outline-offset-1 outline-[#252423]" : ""}`}>
              <Svg size={20}>{art}</Svg>
            </button>
          ))}
          <button type="button" aria-label="Obter mais visuais" className="flex h-5 w-5 items-center justify-center">
            <Svg w={12} h={4} box="0 0 12 4"><path d="M1 1h2v2H1ZM5 1h2v2H5ZM9 1h2v2H9Z" fill="#444" stroke="none" /></Svg>
          </button>
        </div>
      </div>
      <div className="relative min-h-0 flex-1 overflow-hidden border-t border-[#d0d0d0] pl-1 pr-1.5 pt-2">
        <Well title="Eixo X"><div className="flex h-[26px] items-center pl-2.5">{ADD}</div></Well>
        <Well title="Eixo Y">
          <div className="h-[35px] p-0.5 pt-[3px]">
            <div className="flex h-[23px] items-center rounded-xs border border-[#c8c6c4] bg-white pl-1 pr-1">
              <span className="flex-1">Soma de Pets</span>
              <button type="button" aria-label="Opções do campo" className="mr-2"><Svg w={8} h={5} box="0 0 8 5"><path d="m.5.5 3.500 3.500L7.500.5" stroke="#444" /></Svg></button>
              <button type="button" aria-label="Remover campo"><Svg size={7}><path d="m.5.5 6 6M6.500.5l-6 6" stroke="#666" /></Svg></button>
            </div>
          </div>
        </Well>
        <Well title="Legenda"><div className="flex h-[26px] items-center pl-2.5">{ADD}</div></Well>
        <div className="absolute right-0 top-0.5 h-[72px] w-1.5 rounded-full bg-[#605e5c]" />
      </div>
    </aside>
  );
}

function Well({ title, children }) {
  return (
    <section className="mb-[11px]">
      <h3 className="mb-1.5 pl-2 leading-4">{title}</h3>
      <div className="rounded-xs border border-dashed border-[#c8c6c4]">{children}</div>
    </section>
  );
}

function Field({ name, sum, checked }) {
  return (
    <li>
      <label className="flex h-6 items-center">
        <span className="grid h-3 w-3 place-items-center">
          <input type="checkbox" defaultChecked={checked} className="peer col-start-1 row-start-1 h-3 w-3 appearance-none rounded-xs border border-[#484644] checked:border-[#117865] checked:bg-[#117865]" />
          <svg width="8" height="8" viewBox="0 0 8 8" fill="none" stroke="#fff" className="pointer-events-none invisible col-start-1 row-start-1 peer-checked:visible" aria-hidden="true">
            <path d="m.500 4 2.500 2.500L7.500 1.500" strokeWidth="1.200" />
          </svg>
        </span>
        <span className="ml-2 w-[18px]">
          {sum && <Svg w={11} h={12} box="0 0 11 12"><path d="M10 2.500V.500H1L6 6 1 11.500h9v-2" strokeWidth="1.200" /></Svg>}
        </span>
        {name}
      </label>
    </li>
  );
}

function DataPane() {
  return (
    <aside className="flex w-[178px] shrink-0 flex-col border-l border-[#d0d0d0]">
      <div className="flex h-[38px] items-center justify-between pl-2 pr-[7px]">
        <h2 className="text-[15px] font-semibold">Dados</h2>
        <button type="button" aria-label="Recolher dados"><DoubleChevron /></button>
      </div>
      <label className="ml-1 mr-px mt-[7px] flex h-6 items-center gap-1.5 rounded border border-[#d0d0d0] border-b-[#605e5c] bg-white pl-3">
        <Svg size={15}><circle cx="6" cy="6" r="5" stroke="#555" /><path d="m9.500 9.500 5 5" stroke="#555" /></Svg>
        <input type="search" aria-label="Pesquisar dados" placeholder="Pesquisar" className="w-full min-w-0 bg-transparent text-[12px] outline-none placeholder:text-[#706e6c]" />
      </label>
      <button type="button" className="mt-[9px] flex h-6 items-center pl-3.5">
        <Svg w={9} h={6} box="0 0 9 6"><path d="m.5.500 4 4 4-4" stroke="#555" /></Svg>
        <Svg w={18} h={18} box="0 0 18 18" className="ml-1">
          <path d="M3 3.500h9a1 1 0 0 1 1 1v8h-10.500V4.500ZM2.500 6.500h10.500M2.500 9.500h10.500M6 3.500v9M9.500 3.500v9" strokeWidth="1.200" />
        </Svg>
        <Svg w={12} h={12} box="0 0 12 12" className="-ml-2.5 mt-2.5">
          <circle cx="6" cy="6" r="5.700" fill="#117865" stroke="none" /><path d="m3.500 6 2 2 3-3.500" stroke="#fff" strokeWidth="1.300" />
        </Svg>
        Clientes
      </button>
      <ul className="pl-11">
        <Field name="Bairro" />
        <Field name="Estado civil" />
        <Field name="Gênero" />
        <Field name="ID Consumidor" sum />
        <Field name="Pets" sum checked />
      </ul>
    </aside>
  );
}

export default function App() {
  return (
    <div className="flex h-screen flex-col overflow-hidden bg-[#f4f4f4] font-['Open_Sans','Noto_Sans',sans-serif] text-[11px] text-[#252423]">
      <Header />
      <Ribbon />
      <main className="mb-0.5 flex min-h-0 flex-1 border-b border-[#c8c6c4]">
        <Rail />
        <div className="flex min-w-0 flex-1 flex-col bg-white">
          <div className="flex min-h-0 flex-1">
            <div className="relative flex min-w-0 flex-1 flex-col justify-end px-0.5 pb-[59px]">
              <Chart />
              <div className="h-0.5 bg-[repeating-linear-gradient(90deg,#555_0_2px,transparent_2px_4px)]" />
            </div>
            <Filters />
          </div>
          <PageBar />
        </div>
        <Visualizations />
        <DataPane />
      </main>
    </div>
  );
}
